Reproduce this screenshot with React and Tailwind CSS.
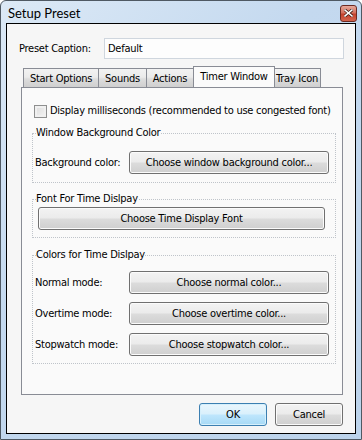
import React from "react";

const font = { fontFamily: '"DejaVu Sans Condensed", "Liberation Sans", sans-serif' };
const titleFont = { fontFamily: 'Lato, "Noto Sans", sans-serif' };

function Btn({ children, className = "" }) {
  return (
    <div
      className={
        "flex items-center justify-center rounded-[3px] border border-[#707070] text-[11px] leading-[14px] text-black shadow-[inset_0_0_0_1px_#fbfbfb] bg-[linear-gradient(to_bottom,#f3f3f3_0%,#ebebeb_48%,#dcdcdc_52%,#cfcfcf_100%)] " +
        className
      }
    >
      {children}
    </div>
  );
}

function Tab({ children, w, selected }) {
  if (selected) {
    return (
      <div
        className={`relative z-10 -mx-[1px] flex h-[21px] items-start justify-center border border-b-0 border-[#898c95] bg-[#fbfbfb] pt-[3px] text-[11px] leading-[14px] ${w}`}
      >
        {children}
      </div>
    );
  }
  return (
    <div
      className={`-ml-px mt-[2px] flex h-[19px] items-center justify-center border border-b-0 border-[#898c95] bg-[linear-gradient(to_bottom,#f2f2f2_0%,#ebebeb_45%,#dddddd_55%,#cfcfcf_100%)] pt-[2px] text-[11px] leading-[14px] first:ml-0 ${w}`}
    >
      {children}
    </div>
  );
}

function Group({ title, children, className = "" }) {
  return (
    <fieldset
      className={
        "ml-[10px] w-[304px] border border-dotted border-[#bfc4ca] pl-[2px] pr-[6px] " + className
      }
    >
      <legend className="ml-[1px] px-0 text-[11px] leading-[16px] text-black">{title}</legend>
      {children}
    </fieldset>
  );
}

function Row({ label, btn, mt = "" }) {
  return (
    <div className={"flex h-[23px] items-center " + mt}>
      <span className="w-[94px] shrink-0 text-[11px] leading-[14px]">{label}</span>
      <Btn className="h-[23px] w-[200px] shrink-0">{btn}</Btn>
    </div>
  );
}

export default function App() {
  return (
    <div style={font} className="h-[440px] w-[362px] whitespace-nowrap tracking-[-0.25px] text-black">
      <div className="flex h-[440px] w-[362px] flex-col rounded-t-[6px] border border-[#4f5963] bg-[linear-gradient(135deg,#dce9f6_0%,#c4d9ef_40%,#bcd3eb_100%)] px-[5px] pb-[5px]">
        {/* Title bar */}
        <div className="flex h-[22px] items-center justify-between">
          <span style={titleFont} className="pl-[2px] pt-[1px] text-[13px] leading-[16px] tracking-normal text-black">
            Setup Preset
          </span>
          <div className="mr-[-1px] mt-[2px] flex h-[17px] w-[17px] items-center justify-center rounded-[3px] border border-[#6b2a22] bg-[linear-gradient(to_bottom,#e6a99b_0%,#d4705d_45%,#c4412c_55%,#d3654e_100%)]">
            <svg width="9" height="8" viewBox="0 0 9 8">
              <path d="M1 1 L8 7 M8 1 L1 7" stroke="#3a1a14" strokeWidth="3" strokeLinecap="square" />
              <path d="M1 1 L8 7 M8 1 L1 7" stroke="#ffffff" strokeWidth="1.6" strokeLinecap="square" />
            </svg>
          </div>
        </div>
        {/* Client */}
        <div className="flex flex-1 flex-col border border-black bg-[#f6f6f6]">
          <div className="mt-[14px] flex h-[21px] items-center pl-[12px]">
            <span className="w-[85px] text-[11px] leading-[14px]">Preset Caption:</span>
            <div className="flex h-[21px] w-[240px] items-center border border-[#cfd6de] bg-[#fdfdfd] pl-[3px] text-[11px] leading-[14px]">
              Default
            </div>
          </div>
          {/* Tabs */}
          <div className="ml-[16px] mt-[7px] flex h-[21px] items-start">
            <Tab w="w-[76px]">Start Options</Tab>
            <Tab w="w-[49px]">Sounds</Tab>
            <Tab w="w-[48px]">Actions</Tab>
            <Tab w="w-[82px]" selected>Timer Window</Tab>
            <Tab w="w-[48px]">Tray Icon</Tab>
          </div>
          <div className="ml-[14px] flex h-[308px] w-[322px] flex-col border border-[#898c95] bg-[#fafafa]">
            <div className="ml-[12px] mt-[15px] flex h-[16px] items-center">
              <div className="h-[13px] w-[13px] shrink-0 border border-[#8e8f8f] bg-[linear-gradient(135deg,#dcdcdc,#f4f4f4)] shadow-[inset_0_0_0_2px_#f0f0f0]" />
              <span className="ml-[3px] text-[11px] leading-[14px]">
                Display milliseconds (recommended to use congested font)
              </span>
            </div>
            <Group title="Window Background Color" className="mt-[6px] h-[58px]">
              <Row label="Background color:" btn="Choose window background color..." mt="mt-[10px]" />
            </Group>
            <Group title="Font For Time Dislpay" className="mt-[8px] h-[47px]">
              <Btn className="ml-[3px] h-[23px] w-[287px]">Choose Time Display Font</Btn>
            </Group>
            <Group title="Colors for Time Dislpay" className="mt-[9px] h-[117px]">
              <Row label="Normal mode:" btn="Choose normal color..." mt="mt-[8px]" />
              <Row label="Overtime mode:" btn="Choose overtime color..." mt="mt-[8px]" />
              <Row label="Stopwatch mode:" btn="Choose stopwatch color..." mt="mt-[8px]" />
            </Group>
          </div>
          <div className="ml-[192px] mt-[8px] flex gap-[8px]">
            <div className="flex h-[23px] w-[68px] items-center justify-center rounded-[3px] border border-[#3c7fb1] text-[11px] leading-[14px] shadow-[inset_0_0_0_1px_#d6f0fc] bg-[linear-gradient(to_bottom,#eaf6fd_0%,#d9f0fc_48%,#bee6fd_52%,#a7d9f5_100%)]">
              OK
            </div>
            <Btn className="h-[23px] w-[68px]">Cancel</Btn>
          </div>
        </div>
      </div>
    </div>
  );
}
